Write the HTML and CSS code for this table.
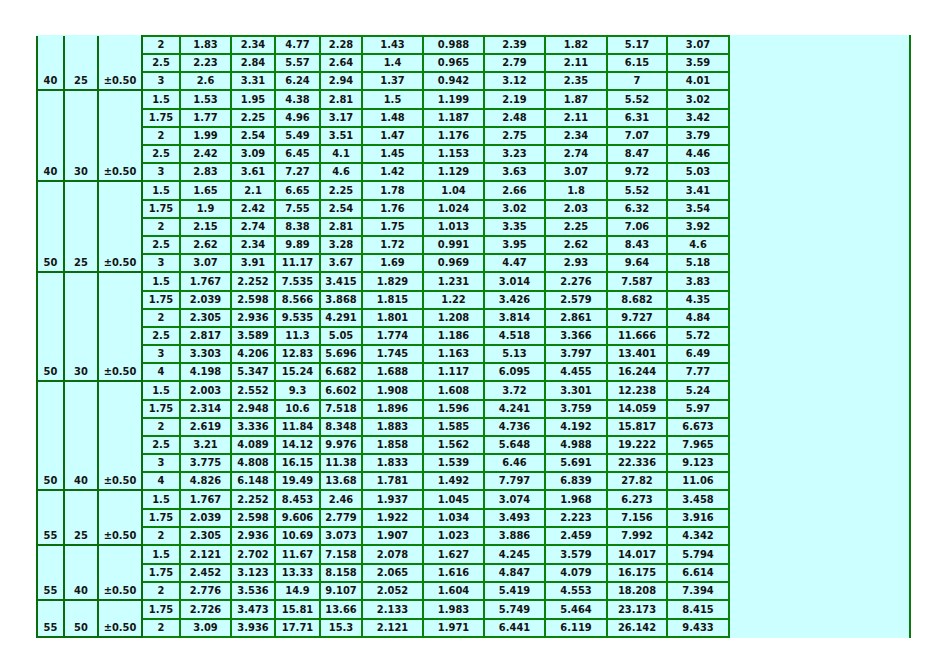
FILE: index.html
```html
<!DOCTYPE html>
<html>
<head>
<meta charset="utf-8">
<link rel="stylesheet" href="styles.css">
</head>
<body>
<div class="sheet">
<table class="data">
<colgroup>
<col class="c27"><col class="c34"><col class="c44">
<col class="c38"><col class="c51"><col class="c44"><col class="c45"><col class="c42">
<col class="c61"><col class="c61"><col class="c61"><col class="c62"><col class="c60"><col class="c62">
</colgroup>
<tbody>
<tr class="first"><td class="k" rowspan="3">40</td><td class="k" rowspan="3">25</td><td class="k" rowspan="3">±0.50</td><td>2</td><td>1.83</td><td>2.34</td><td>4.77</td><td>2.28</td><td>1.43</td><td>0.988</td><td>2.39</td><td>1.82</td><td>5.17</td><td>3.07</td></tr>
<tr><td>2.5</td><td>2.23</td><td>2.84</td><td>5.57</td><td>2.64</td><td>1.4</td><td>0.965</td><td>2.79</td><td>2.11</td><td>6.15</td><td>3.59</td></tr>
<tr><td>3</td><td>2.6</td><td>3.31</td><td>6.24</td><td>2.94</td><td>1.37</td><td>0.942</td><td>3.12</td><td>2.35</td><td>7</td><td>4.01</td></tr>

<tr class="g"><td class="k" rowspan="5">40</td><td class="k" rowspan="5">30</td><td class="k" rowspan="5">±0.50</td><td>1.5</td><td>1.53</td><td>1.95</td><td>4.38</td><td>2.81</td><td>1.5</td><td>1.199</td><td>2.19</td><td>1.87</td><td>5.52</td><td>3.02</td></tr>
<tr><td>1.75</td><td>1.77</td><td>2.25</td><td>4.96</td><td>3.17</td><td>1.48</td><td>1.187</td><td>2.48</td><td>2.11</td><td>6.31</td><td>3.42</td></tr>
<tr><td>2</td><td>1.99</td><td>2.54</td><td>5.49</td><td>3.51</td><td>1.47</td><td>1.176</td><td>2.75</td><td>2.34</td><td>7.07</td><td>3.79</td></tr>
<tr><td>2.5</td><td>2.42</td><td>3.09</td><td>6.45</td><td>4.1</td><td>1.45</td><td>1.153</td><td>3.23</td><td>2.74</td><td>8.47</td><td>4.46</td></tr>
<tr><td>3</td><td>2.83</td><td>3.61</td><td>7.27</td><td>4.6</td><td>1.42</td><td>1.129</td><td>3.63</td><td>3.07</td><td>9.72</td><td>5.03</td></tr>

<tr class="g"><td class="k" rowspan="5">50</td><td class="k" rowspan="5">25</td><td class="k" rowspan="5">±0.50</td><td>1.5</td><td>1.65</td><td>2.1</td><td>6.65</td><td>2.25</td><td>1.78</td><td>1.04</td><td>2.66</td><td>1.8</td><td>5.52</td><td>3.41</td></tr>
<tr><td>1.75</td><td>1.9</td><td>2.42</td><td>7.55</td><td>2.54</td><td>1.76</td><td>1.024</td><td>3.02</td><td>2.03</td><td>6.32</td><td>3.54</td></tr>
<tr><td>2</td><td>2.15</td><td>2.74</td><td>8.38</td><td>2.81</td><td>1.75</td><td>1.013</td><td>3.35</td><td>2.25</td><td>7.06</td><td>3.92</td></tr>
<tr><td>2.5</td><td>2.62</td><td>2.34</td><td>9.89</td><td>3.28</td><td>1.72</td><td>0.991</td><td>3.95</td><td>2.62</td><td>8.43</td><td>4.6</td></tr>
<tr><td>3</td><td>3.07</td><td>3.91</td><td>11.17</td><td>3.67</td><td>1.69</td><td>0.969</td><td>4.47</td><td>2.93</td><td>9.64</td><td>5.18</td></tr>

<tr class="g"><td class="k" rowspan="6">50</td><td class="k" rowspan="6">30</td><td class="k" rowspan="6">±0.50</td><td>1.5</td><td>1.767</td><td>2.252</td><td>7.535</td><td>3.415</td><td>1.829</td><td>1.231</td><td>3.014</td><td>2.276</td><td>7.587</td><td>3.83</td></tr>
<tr><td>1.75</td><td>2.039</td><td>2.598</td><td>8.566</td><td>3.868</td><td>1.815</td><td>1.22</td><td>3.426</td><td>2.579</td><td>8.682</td><td>4.35</td></tr>
<tr><td>2</td><td>2.305</td><td>2.936</td><td>9.535</td><td>4.291</td><td>1.801</td><td>1.208</td><td>3.814</td><td>2.861</td><td>9.727</td><td>4.84</td></tr>
<tr><td>2.5</td><td>2.817</td><td>3.589</td><td>11.3</td><td>5.05</td><td>1.774</td><td>1.186</td><td>4.518</td><td>3.366</td><td>11.666</td><td>5.72</td></tr>
<tr><td>3</td><td>3.303</td><td>4.206</td><td>12.83</td><td>5.696</td><td>1.745</td><td>1.163</td><td>5.13</td><td>3.797</td><td>13.401</td><td>6.49</td></tr>
<tr><td>4</td><td>4.198</td><td>5.347</td><td>15.24</td><td>6.682</td><td>1.688</td><td>1.117</td><td>6.095</td><td>4.455</td><td>16.244</td><td>7.77</td></tr>

<tr class="g"><td class="k" rowspan="6">50</td><td class="k" rowspan="6">40</td><td class="k" rowspan="6">±0.50</td><td>1.5</td><td>2.003</td><td>2.552</td><td>9.3</td><td>6.602</td><td>1.908</td><td>1.608</td><td>3.72</td><td>3.301</td><td>12.238</td><td>5.24</td></tr>
<tr><td>1.75</td><td>2.314</td><td>2.948</td><td>10.6</td><td>7.518</td><td>1.896</td><td>1.596</td><td>4.241</td><td>3.759</td><td>14.059</td><td>5.97</td></tr>
<tr><td>2</td><td>2.619</td><td>3.336</td><td>11.84</td><td>8.348</td><td>1.883</td><td>1.585</td><td>4.736</td><td>4.192</td><td>15.817</td><td>6.673</td></tr>
<tr><td>2.5</td><td>3.21</td><td>4.089</td><td>14.12</td><td>9.976</td><td>1.858</td><td>1.562</td><td>5.648</td><td>4.988</td><td>19.222</td><td>7.965</td></tr>
<tr><td>3</td><td>3.775</td><td>4.808</td><td>16.15</td><td>11.38</td><td>1.833</td><td>1.539</td><td>6.46</td><td>5.691</td><td>22.336</td><td>9.123</td></tr>
<tr><td>4</td><td>4.826</td><td>6.148</td><td>19.49</td><td>13.68</td><td>1.781</td><td>1.492</td><td>7.797</td><td>6.839</td><td>27.82</td><td>11.06</td></tr>

<tr class="g"><td class="k" rowspan="3">55</td><td class="k" rowspan="3">25</td><td class="k" rowspan="3">±0.50</td><td>1.5</td><td>1.767</td><td>2.252</td><td>8.453</td><td>2.46</td><td>1.937</td><td>1.045</td><td>3.074</td><td>1.968</td><td>6.273</td><td>3.458</td></tr>
<tr><td>1.75</td><td>2.039</td><td>2.598</td><td>9.606</td><td>2.779</td><td>1.922</td><td>1.034</td><td>3.493</td><td>2.223</td><td>7.156</td><td>3.916</td></tr>
<tr><td>2</td><td>2.305</td><td>2.936</td><td>10.69</td><td>3.073</td><td>1.907</td><td>1.023</td><td>3.886</td><td>2.459</td><td>7.992</td><td>4.342</td></tr>

<tr class="g"><td class="k" rowspan="3">55</td><td class="k" rowspan="3">40</td><td class="k" rowspan="3">±0.50</td><td>1.5</td><td>2.121</td><td>2.702</td><td>11.67</td><td>7.158</td><td>2.078</td><td>1.627</td><td>4.245</td><td>3.579</td><td>14.017</td><td>5.794</td></tr>
<tr><td>1.75</td><td>2.452</td><td>3.123</td><td>13.33</td><td>8.158</td><td>2.065</td><td>1.616</td><td>4.847</td><td>4.079</td><td>16.175</td><td>6.614</td></tr>
<tr><td>2</td><td>2.776</td><td>3.536</td><td>14.9</td><td>9.107</td><td>2.052</td><td>1.604</td><td>5.419</td><td>4.553</td><td>18.208</td><td>7.394</td></tr>

<tr class="g"><td class="k" rowspan="2">55</td><td class="k" rowspan="2">50</td><td class="k" rowspan="2">±0.50</td><td>1.75</td><td>2.726</td><td>3.473</td><td>15.81</td><td>13.66</td><td>2.133</td><td>1.983</td><td>5.749</td><td>5.464</td><td>23.173</td><td>8.415</td></tr>
<tr><td>2</td><td>3.09</td><td>3.936</td><td>17.71</td><td>15.3</td><td>2.121</td><td>1.971</td><td>6.441</td><td>6.119</td><td>26.142</td><td>9.433</td></tr>
</tbody>
</table>
</div>
</body>
</html>
```

FILE: styles.css
```css
body {
  margin: 0;
  background: #ffffff;
  font-family: "DejaVu Sans Condensed", "DejaVu Sans", Verdana, sans-serif;
}

.sheet {
  margin: 35px 0 0 36px;
  width: 873px;
  background: #ccffff;
  border-right: 2px solid #0a7a0a;
}

.data {
  border-collapse: collapse;
  table-layout: fixed;
  width: 694px;
}

.c27 { width: 27px; }
.c34 { width: 34px; }
.c44 { width: 44px; }
.c38 { width: 38px; }
.c51 { width: 51px; }
.c45 { width: 45px; }
.c42 { width: 42px; }
.c61 { width: 61px; }
.c62 { width: 62px; }
.c60 { width: 60px; }

.data td {
  padding: 0;
  height: 16px;
  line-height: 16px;
  font-size: 11px;
  font-stretch: condensed;
  font-weight: bold;
  text-align: center;
  color: #141414;
  border: 2px solid #0a820a;
  white-space: nowrap;
  background: #ccffff;
}

.data td.k {
  vertical-align: bottom;
  border: 2px solid #0b6c0b;
}

.data tr.first td.k {
  border-top: none;
}

.data tr.g td {
  padding-top: 1px;
}
```
